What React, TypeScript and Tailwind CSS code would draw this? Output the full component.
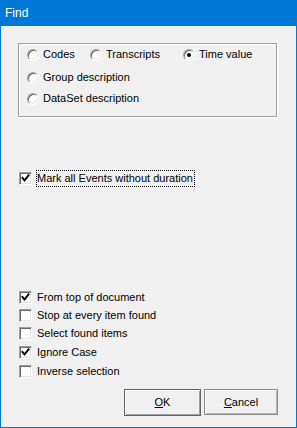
import React from "react";

const font = { fontFamily: '"Liberation Sans", Arial, sans-serif' };

function Radio({ checked }: { checked?: boolean }) {
  return (
    <div className="relative w-[12px] h-[12px] shrink-0 rounded-full border border-t-[#a0a0a0] border-l-[#a0a0a0] border-r-[#ffffff] border-b-[#ffffff] bg-white shadow-[inset_1px_1px_0_#696969,inset_-1px_-1px_0_#e3e3e3] flex items-center justify-center">
      {checked && <div className="w-[4px] h-[4px] rounded-full bg-black" />}
    </div>
  );
}

function Check({ checked }: { checked?: boolean }) {
  return (
    <div className="w-[13px] h-[13px] shrink-0 border border-t-[#a0a0a0] border-l-[#a0a0a0] border-r-[#ffffff] border-b-[#ffffff] bg-white shadow-[inset_1px_1px_0_#696969,inset_-1px_-1px_0_#e3e3e3] flex items-center justify-center">
      {checked && (
        <svg width="11" height="11" viewBox="0 0 11 11">
          <path d="M2.5 5 L4.5 7.5 L8.5 2.5" fill="none" stroke="#000" strokeWidth="2" strokeLinecap="square" />
        </svg>
      )}
    </div>
  );
}

function RadioItem({ label, checked, width }: { label: string; checked?: boolean; width?: string }) {
  return (
    <div className={`flex items-center h-[13px] gap-[4px] ${width ?? ""}`}>
      <Radio checked={checked} />
      <span className="leading-[13px]">{label}</span>
    </div>
  );
}

function CheckRow({ label, checked, mt }: { label: string; checked?: boolean; mt: string }) {
  return (
    <div className={`flex items-center h-[13px] ml-[18px] gap-[5px] ${mt}`}>
      <Check checked={checked} />
      <span className="leading-[13px]">{label}</span>
    </div>
  );
}

export default function App() {
  return (
    <div className="w-[297px] h-[428px] bg-[#0078d7] px-[1px] pb-[1px] flex flex-col text-[11px] text-black" style={font}>
      <div className="h-[26px] flex items-center pl-[4px] text-white text-[12px] shrink-0">Find</div>
      <div className="flex-1 bg-[#f0f0f0] flex flex-col">
        <div className="ml-[17px] mt-[17px] w-[259px] h-[74px] border border-[#a0a0a0] shadow-[inset_1px_1px_0_#ffffff,1px_1px_0_#ffffff] pl-[8px] pt-[4px] flex flex-col">
          <div className="flex items-center">
            <RadioItem label="Codes" width="w-[63px]" />
            <RadioItem label="Transcripts" width="w-[93px]" />
            <RadioItem label="Time value" checked />
          </div>
          <div className="mt-[10px]">
            <RadioItem label="Group description" />
          </div>
          <div className="mt-[8px]">
            <RadioItem label="DataSet description" />
          </div>
        </div>

        <div className="flex items-center h-[17px] ml-[18px] mt-[53px] gap-[4px]">
          <Check checked />
          <span className="border border-dotted border-black h-[17px] leading-[15px] pr-[1px] pl-0">Mark all Events without duration</span>
        </div>

        <CheckRow label="From top of document" checked mt="mt-[104px]" />
        <CheckRow label="Stop at every item found" mt="mt-[5px]" />
        <CheckRow label="Select found items" mt="mt-[5px]" />
        <CheckRow label="Ignore Case" checked mt="mt-[6px]" />
        <CheckRow label="Inverse selection" mt="mt-[6px]" />

        <div className="flex ml-[123px] mt-[11px] gap-[3px]">
          <div className="w-[77px] h-[27px] border border-[#646464] bg-[#f0f0f0] shadow-[inset_1px_1px_0_#ffffff,inset_-1px_-1px_0_#a0a0a0] flex items-center justify-center">
            <span><span className="underline">O</span>K</span>
          </div>
          <div className="w-[74px] h-[26px] border border-[#8a8a8a] bg-[#f0f0f0] shadow-[inset_1px_1px_0_#ffffff,inset_-1px_-1px_0_#b4b4b4] flex items-center justify-center">
            <span><span className="underline">C</span>ancel</span>
          </div>
        </div>
      </div>
    </div>
  );
}
